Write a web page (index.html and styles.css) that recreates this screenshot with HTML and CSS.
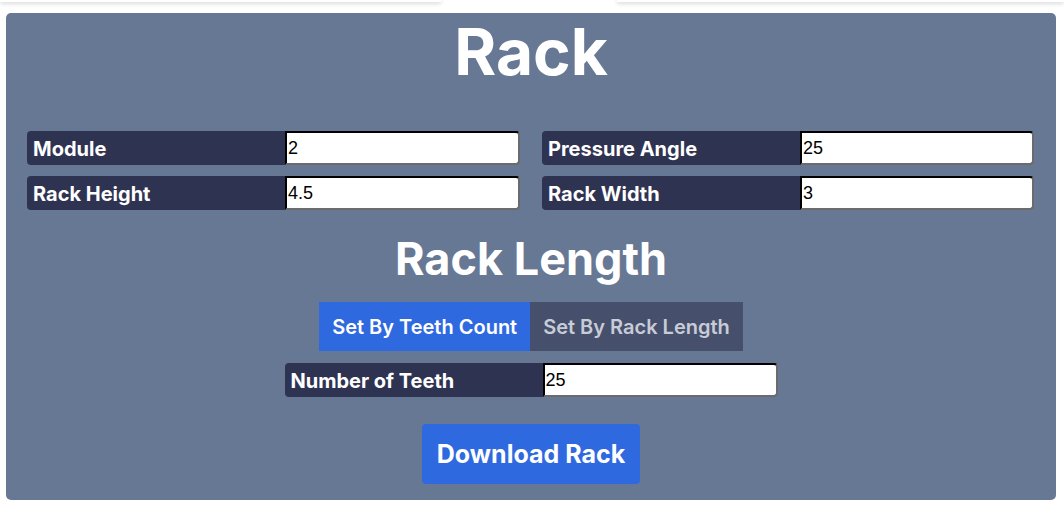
FILE: index.html
```html
<!DOCTYPE html>
<html>
<head>
<meta charset="utf-8">
<link rel="stylesheet" href="styles.css">
</head>
<body>
<div class="topbar">
  <div class="tab tab-left"></div>
  <div class="tab tab-right"></div>
</div>
<main class="panel">
  <h1 class="title">Rack</h1>
  <div class="grid">
    <div class="field"><span class="label">Module</span><input class="input" type="text" value="2"></div>
    <div class="field"><span class="label">Pressure Angle</span><input class="input" type="text" value="25"></div>
    <div class="field"><span class="label">Rack Height</span><input class="input" type="text" value="4.5"></div>
    <div class="field"><span class="label">Rack Width</span><input class="input" type="text" value="3"></div>
  </div>
  <h2 class="subtitle">Rack Length</h2>
  <div class="toggle">
    <button class="tbtn active">Set By Teeth Count</button>
    <button class="tbtn">Set By Rack Length</button>
  </div>
  <div class="field single"><span class="label">Number of Teeth</span><input class="input" type="text" value="25"></div>
  <button class="download">Download Rack</button>
</main>
</body>
</html>
```

FILE: styles.css
```css
* { box-sizing: border-box; }
body {
  margin: 0;
  background: #ffffff;
  font-family: Inter, "Noto Sans", sans-serif;
}
.topbar {
  display: flex;
  justify-content: space-between;
  height: 13px;
  overflow: hidden;
}
.tab {
  height: 2px;
  background: #ffffff;
  box-shadow: 0 1px 4px rgba(0,0,0,0.28);
}
.tab-left { width: 441px; }
.tab-right { width: 447px; }
.panel {
  margin: 0 8px 0 6px;
  background: #677895;
  border-radius: 5px;
  padding: 0 21px 16px;
  display: flex;
  flex-direction: column;
  align-items: center;
}
.title {
  margin: 0;
  font-size: 64px;
  line-height: 77px;
  font-weight: 700;
  color: #ffffff;
}
.grid {
  margin-top: 41px;
  width: 100%;
  display: grid;
  grid-template-columns: 493px 492px;
  column-gap: 22px;
  row-gap: 11px;
}
.field {
  display: flex;
  height: 34px;
}
.label {
  width: 258px;
  flex: none;
  background: #2f3352;
  color: #ffffff;
  font-weight: 700;
  font-size: 20px;
  line-height: 32px;
  padding-top: 2px;
  padding-left: 6px;
  border-radius: 4px 0 0 4px;
}
.input {
  flex: 1;
  min-width: 0;
  height: 34px;
  margin: 0;
  border: 2px inset #3a3a3a;
  border-color: #2a2a2a #6b6b6b #6b6b6b #2a2a2a;
  border-radius: 0 4px 4px 0;
  background: #ffffff;
  font-family: "Liberation Sans", Arial, sans-serif;
  font-size: 18px;
  padding: 1px 1px 0;
  color: #000;
}
.subtitle {
  margin: 22px 0 0;
  font-size: 45px;
  line-height: 54px;
  font-weight: 700;
  color: #ffffff;
}
.toggle {
  margin-top: 16px;
  display: flex;
}
.tbtn {
  border: 0;
  margin: 0;
  height: 49px;
  padding: 0 13px;
  font-family: Inter, "Noto Sans", sans-serif;
  font-size: 20px;
  font-weight: 600;
  background: #46506c;
  color: #c8ccd7;
}
.tbtn.active {
  background: #2f69e0;
  color: #ffffff;
}
.field.single {
  margin-top: 12px;
  width: 493px;
}
.download {
  margin-top: 27px;
  height: 60px;
  padding: 0 15px;
  border: 0;
  border-radius: 4px;
  background: #2f69e0;
  color: #ffffff;
  font-family: Inter, "Noto Sans", sans-serif;
  font-size: 25px;
  font-weight: 700;
}
```
